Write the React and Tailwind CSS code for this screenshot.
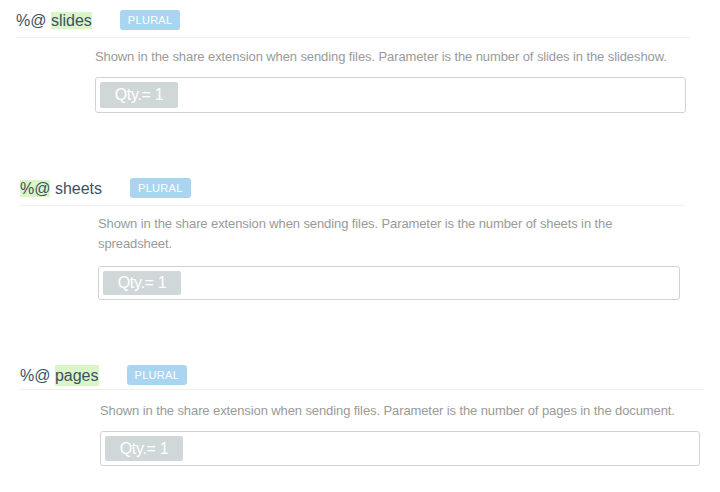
import React from 'react'

const items = [
  {
    key: 'slides',
    wrap: 'ml-[16px] w-[674px] mt-[10px]',
    head: 'pb-[7px]',
    indent: 'ml-[79px] mr-[4px]',
    desc: 'mt-[9px]',
    box: 'mt-[10px] h-[36px]',
    mark: 'name',
    hl: 'py-0',
    text: 'Shown in the share extension when sending files. Parameter is the number of slides in the slideshow.',
  },
  {
    key: 'sheets',
    wrap: 'ml-[20px] w-[664px] mt-[65px]',
    head: 'pb-[7px]',
    indent: 'ml-[78px] mr-[4px]',
    desc: 'mt-[8px] max-w-[530px]',
    box: 'mt-[12px] h-[34px]',
    mark: 'token',
    hl: 'py-0',
    text: 'Shown in the share extension when sending files. Parameter is the number of sheets in the spreadsheet.',
  },
  {
    key: 'pages',
    wrap: 'ml-[20px] w-[684px] mt-[65px]',
    head: 'pb-[4px]',
    indent: 'ml-[80px] mr-[4px]',
    desc: 'mt-[11px]',
    box: 'mt-[10px] h-[35px]',
    mark: 'name',
    hl: 'py-[2px]',
    text: 'Shown in the share extension when sending files. Parameter is the number of pages in the document.',
  },
]

const PluralBlock = ({ item }) => {
  return (
    <div className={item.wrap}>
      <div className={'flex items-center border-b border-[#efefef] ' + item.head}>
        <div className="text-[16px] leading-[19px] text-[#3e5061]">
          <span className={item.mark === 'token' ? 'bg-[#daf5c8] ' + item.hl : ''}>%@</span>{' '}
          <span className={item.mark === 'name' ? 'bg-[#daf5c8] ' + item.hl : ''}>{item.key}</span>
        </div>
        <span className="ml-[28px] px-[8px] h-[20px] flex items-center rounded-[3px] bg-[#a9d5f1] text-white text-[11px] tracking-[0.3px]">
          PLURAL
        </span>
      </div>
      <div className={item.indent}>
        <div className={'text-[13px] leading-[20px] tracking-[-0.1px] text-[#9a9a9a] ' + item.desc}>
          {item.text}
        </div>
        <div className={'border border-[#d2d2d2] rounded-[3px] p-[4px] bg-white ' + item.box}>
          <div className="w-[78px] h-full flex items-center justify-center rounded-[2px] bg-[#cfd7d9] text-white text-[16px] tracking-[-0.3px]">
            Qty.= 1
          </div>
        </div>
      </div>
    </div>
  )
}

const App = () => {
  return (
    <div className="w-[720px] h-[492px] bg-white overflow-hidden font-['Liberation_Sans',Arial,sans-serif] flex flex-col">
      {items.map((item) => (
        <PluralBlock key={item.key} item={item} />
      ))}
    </div>
  )
}

export default App
